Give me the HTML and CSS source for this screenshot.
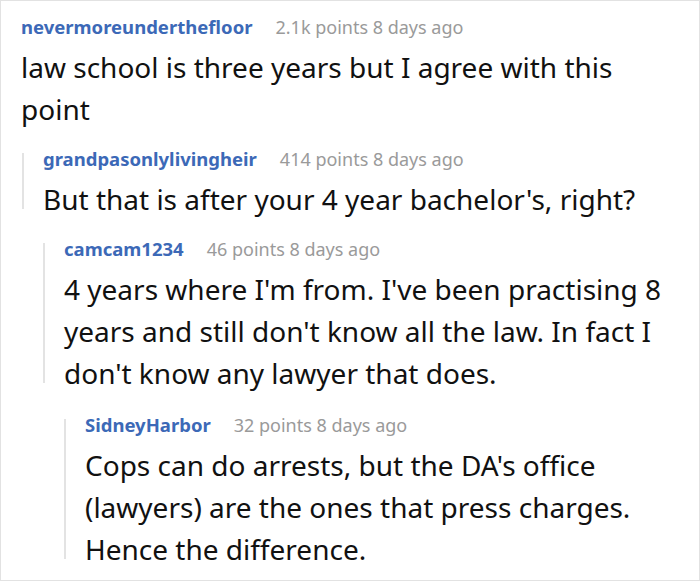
FILE: index.html
```html
<!DOCTYPE html>
<html lang="en">
<head>
<meta charset="utf-8">
<title>Thread</title>
<link rel="stylesheet" href="styles.css">
</head>
<body>
<div class="thread">
  <div class="comment root">
    <div class="self">
      <div class="body">
        <div class="header"><span class="user">nevermoreunderthefloor</span><span class="meta">2.1k points 8 days ago</span></div>
        <p class="text">law school is three years but I agree with this point</p>
      </div>
    </div>
    <div class="replies">
      <div class="comment">
        <div class="self">
          <div class="bar"></div>
          <div class="body">
            <div class="header"><span class="user">grandpasonlylivingheir</span><span class="meta">414 points 8 days ago</span></div>
            <p class="text">But that is after your 4 year bachelor's, right?</p>
          </div>
        </div>
        <div class="replies">
          <div class="comment">
            <div class="self">
              <div class="bar"></div>
              <div class="body">
                <div class="header"><span class="user">camcam1234</span><span class="meta">46 points 8 days ago</span></div>
                <p class="text">4 years where I'm from. I've been practising 8 years and still don't know all the law. In fact I don't know any lawyer that does.</p>
              </div>
            </div>
            <div class="replies">
              <div class="comment">
                <div class="self">
                  <div class="bar"></div>
                  <div class="body">
                    <div class="header"><span class="user">SidneyHarbor</span><span class="meta">32 points 8 days ago</span></div>
                    <p class="text">Cops can do arrests, but the DA's office (lawyers) are the ones that press charges. Hence the difference.</p>
                  </div>
                </div>
              </div>
            </div>
          </div>
        </div>
      </div>
    </div>
  </div>
</div>
</body>
</html>
```

FILE: styles.css
```css
html, body {
  margin: 0;
  padding: 0;
  background: #ffffff;
}

.thread {
  width: 700px;
  height: 581px;
  box-sizing: border-box;
  border: 1px solid #e2e2e2;
  padding: 14px 20px 0 20px;
  font-family: "Noto Sans", "Open Sans", sans-serif;
  color: #111111;
  overflow: hidden;
}

.self {
  display: flex;
}

.replies {
  margin-left: 21px;
}

.root > .replies {
  margin-left: 1px;
}

.replies > .comment {
  margin-top: 17px;
}

.replies .replies .replies > .comment {
  margin-top: 19px;
}

.bar {
  flex: 0 0 2px;
  width: 2px;
  background: #e3e3e3;
  margin: 6px 19px 11px 0;
}

.body {
  flex: 1;
  min-width: 0;
}

.header {
  font-size: 18px;
  line-height: 24px;
  white-space: nowrap;
}

.user {
  font-size: 18.5px;
  font-weight: 700;
  color: #3c69b7;
}

.meta {
  color: #9a9a9a;
  margin-left: 23px;
}

.text {
  margin: 7px 0 0 0;
  font-size: 28px;
  line-height: 42px;
}
```
